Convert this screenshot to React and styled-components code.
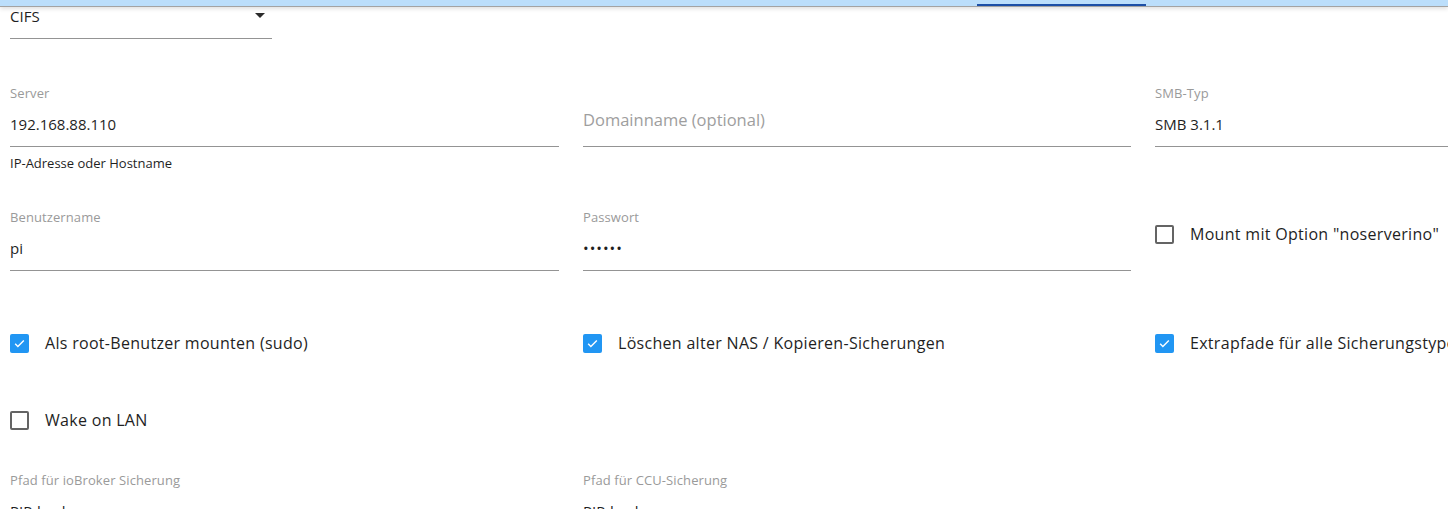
import React from 'react'
import styled, { createGlobalStyle } from 'styled-components'

const GlobalStyle = createGlobalStyle`
    html, body {
        margin: 0;
        padding: 0;
        background: #fff;
        overflow: hidden;
    }
    body {
        font-family: "Open Sans", "Noto Sans", sans-serif;
        color: #1f1f1f;
    }
`;

const TabBar = styled.div`
    position: relative;
    height: 6px;
    background: #bbdefb;
    border-bottom: 1px solid #a3a3a3;
    box-shadow: 0 2px 4px rgba(0, 0, 0, 0.12);
`;

const TabIndicator = styled.div`
    position: absolute;
    left: 977px;
    width: 169px;
    bottom: 0;
    height: 2px;
    background: #1c4fa6;
`;

const Page = styled.div`
    height: 502px;
    overflow: hidden;
    padding-left: 10px;
`;

const Select = styled.div`
    width: 262px;
    height: 31px;
    border-bottom: 1px solid #949494;
    display: flex;
    justify-content: space-between;
    align-items: flex-start;
    font-size: 15px;
    line-height: 18px;
    color: #1f1f1f;
`;

const Arrow = styled.span`
    margin-top: 6px;
    margin-right: 7px;
    width: 0;
    height: 0;
    border-left: 5px solid transparent;
    border-right: 5px solid transparent;
    border-top: 5px solid #2b2b2b;
`;

const Row = styled.div`
    display: grid;
    grid-template-columns: 549px 548px 549px;
    column-gap: 24px;
    align-items: start;
    margin-top: ${(p) => p.$top}px;
`;

const Field = styled.div`
    display: flex;
    flex-direction: column;
`;

const Label = styled.div`
    font-size: 13px;
    line-height: 16px;
    height: 16px;
    padding-top: 1px;
    margin-bottom: -1px;
    color: #9a9a9a;
    letter-spacing: 0.1px;
`;

const InputLine = styled.div`
    margin-top: ${(p) => (p.$empty ? 24 : 8)}px;
    padding-top: ${(p) => (p.$empty ? 0 : 4)}px;
    padding-bottom: ${(p) => (p.$empty ? 14 : 10)}px;
    height: 24px;
    line-height: 24px;
    font-size: ${(p) => (p.$empty ? 16.5 : 15)}px;
    color: ${(p) => (p.$empty ? '#9e9e9e' : '#1f1f1f')};
    border-bottom: 1px solid #949494;
    letter-spacing: ${(p) => (p.$dots ? '1px' : 'normal')};
    white-space: nowrap;
`;

const Helper = styled.div`
    margin-top: 8px;
    font-size: 13px;
    line-height: 16px;
    color: #1f1f1f;
`;

const CheckRow = styled.label`
    display: flex;
    align-items: center;
    gap: 16px;
    height: 24px;
    margin-top: ${(p) => p.$top || 0}px;
    font-size: 16px;
    letter-spacing: 0.3px;
    color: #1f1f1f;
    white-space: nowrap;
`;

const Box = styled.span`
    flex: none;
    box-sizing: border-box;
    width: 19px;
    height: 19px;
    border-radius: 2px;
    display: flex;
    align-items: center;
    justify-content: center;
    background: ${(p) => (p.$checked ? '#2196f3' : '#fff')};
    border: ${(p) => (p.$checked ? 'none' : '2px solid #646464')};
`;

const TextField = ({ label, value, helper, placeholder, dots }) => (
    <Field>
        {label ? <Label>{label}</Label> : null}
        <InputLine $empty={!!placeholder} $dots={dots}>
            {placeholder || value}
        </InputLine>
        {helper ? <Helper>{helper}</Helper> : null}
    </Field>
);

const Checkbox = ({ checked, children, top }) => (
    <CheckRow $top={top}>
        <Box $checked={checked}>
            {checked ? (
                <svg width="13" height="13" viewBox="0 0 24 24">
                    <path d="M4 12.5l5 5L20 6.5" fill="none" stroke="#fff" strokeWidth="2.6" />
                </svg>
            ) : null}
        </Box>
        {children}
    </CheckRow>
);

const App = () => {
    return (
        <>
            <GlobalStyle />
            <TabBar>
                <TabIndicator />
            </TabBar>
            <Page>
                <Select>
                    <span>CIFS</span>
                    <Arrow />
                </Select>

                <Row $top={45}>
                    <TextField label="Server" value="192.168.88.110" helper="IP-Adresse oder Hostname" />
                    <TextField placeholder="Domainname (optional)" />
                    <TextField label="SMB-Typ" value="SMB 3.1.1" />
                </Row>

                <Row $top={37}>
                    <TextField label="Benutzername" value="pi" />
                    <TextField label="Passwort" value="••••••" dots />
                    <Checkbox top={14}>Mount mit Option "noserverino"</Checkbox>
                </Row>

                <Row $top={60}>
                    <Checkbox checked>Als root-Benutzer mounten (sudo)</Checkbox>
                    <Checkbox checked>Löschen alter NAS / Kopieren-Sicherungen</Checkbox>
                    <Checkbox checked>Extrapfade für alle Sicherungstypen</Checkbox>
                </Row>

                <Row $top={53}>
                    <Checkbox>Wake on LAN</Checkbox>
                </Row>

                <Row $top={39}>
                    <TextField label="Pfad für ioBroker Sicherung" value="PIP-backup" />
                    <TextField label="Pfad für CCU-Sicherung" value="PIP-backup" />
                </Row>
            </Page>
        </>
    )
}

export default App
